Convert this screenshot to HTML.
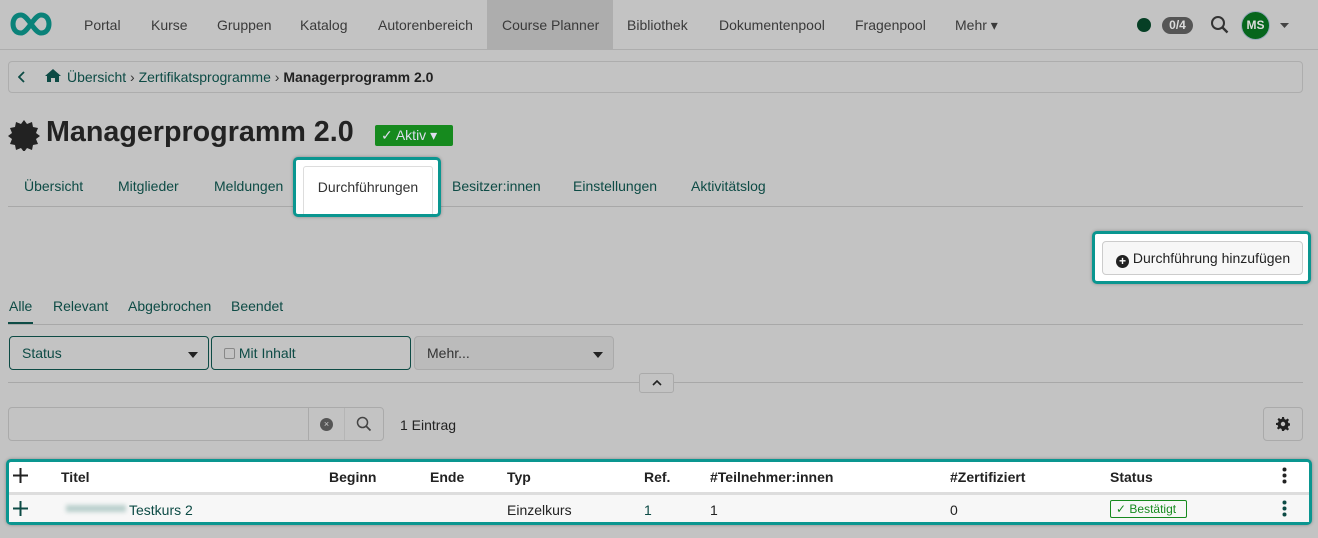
<!DOCTYPE html>
<html><head><meta charset="utf-8">
<style>
*{box-sizing:border-box;margin:0;padding:0}
body{width:1318px;height:538px;background:#c3c3c3;font-family:"Liberation Sans",sans-serif;font-size:14px;color:#333;position:relative;overflow:hidden}
.a{position:absolute;white-space:nowrap}
.nav{left:0;top:0;width:1318px;height:50px;border-bottom:1px solid #adadad}
.nav span{position:absolute;top:17px;color:#3a3a3a}
.g{color:#0d4b45}
.tab{top:178px;color:#0d4b45}
.hl{border:3px solid #0a9690;border-radius:5px;background:#fff;box-shadow:0 0 3px rgba(0,0,0,.3)}
</style></head><body>
<div class="a nav">
<svg style="position:absolute;left:10px;top:11px" width="42" height="26" viewBox="0 0 42 26"><path d="M11 4C5 4 3 9 3 13s2 9 8 9c7 0 13-18 20-18 6 0 8 5 8 9s-2 9-8 9c-7 0-13-18-20-18z" fill="none" stroke="#0a8279" stroke-width="5"/></svg>
<span style="left:84px">Portal</span><span style="left:151px">Kurse</span><span style="left:217px">Gruppen</span><span style="left:300px">Katalog</span><span style="left:378px">Autorenbereich</span>
<div style="position:absolute;left:487px;top:0;width:126px;height:50px;background:#adadad"></div>
<span style="left:502px">Course Planner</span><span style="left:627px">Bibliothek</span><span style="left:719px">Dokumentenpool</span><span style="left:855px">Fragenpool</span><span style="left:955px">Mehr ▾</span>
<div style="position:absolute;left:1137px;top:18px;width:14px;height:14px;border-radius:50%;background:#063f25"></div>
<div style="position:absolute;left:1162px;top:17px;width:31px;height:17px;border-radius:9px;background:#555;color:#ddd;font-size:12px;font-weight:bold;text-align:center;line-height:17px">0/4</div>
<svg style="position:absolute;left:1210px;top:15px" width="20" height="20"><circle cx="8" cy="8" r="6" fill="none" stroke="#333" stroke-width="2"/><path d="M12.5 12.5l5 5" stroke="#333" stroke-width="2.4"/></svg>
<div style="position:absolute;left:1241px;top:11px;width:29px;height:29px;border-radius:50%;background:#06661d;border:1px solid #9ab;color:#ddd;font-size:12px;font-weight:bold;text-align:center;line-height:27px">MS</div>
<svg style="position:absolute;left:1280px;top:23px" width="9" height="5"><path d="M0 0h9L4.5 5z" fill="#444"/></svg>
</div>
<div class="a" style="left:8px;top:61px;width:1295px;height:32px;border:1px solid #adadad;border-radius:4px"></div>
<svg class="a" style="left:18px;top:71px" width="8" height="12"><path d="M6 1L1 6l5 5" fill="none" stroke="#0d4b45" stroke-width="1.8"/></svg>
<svg class="a" style="left:44px;top:68px" width="18" height="15"><path d="M9 1L1 8h2v6h4v-4h4v4h4V8h2z" fill="#0d4b45"/></svg>
<div class="a" style="left:67px;top:69px"><span class="g">Übersicht</span> › <span class="g">Zertifikatsprogramme</span> › <b style="color:#222">Managerprogramm 2.0</b></div>
<svg class="a" style="left:8px;top:119px" width="32" height="32" viewBox="0 0 32 32"><path d="M16 1l3 4 5-2 1 5 5 1-2 5 4 3-4 3 2 5-5 1-1 5-5-2-3 4-3-4-5 2-1-5-5-1 2-5-4-3 4-3-2-5 5-1 1-5 5 2z" fill="#222"/></svg>
<div class="a" style="left:46px;top:116px;font-size:28.7px;font-weight:bold;color:#222">Managerprogramm 2.0</div>
<div class="a" style="left:375px;top:125px;width:78px;height:21px;background:#168a1e;border-radius:2px;color:#dde;font-size:14px;line-height:21px;padding-left:6px">✓ Aktiv ▾</div>
<span class="a tab" style="left:24px">Übersicht</span><span class="a tab" style="left:118px">Mitglieder</span><span class="a tab" style="left:214px">Meldungen</span>
<span class="a tab" style="left:452px">Besitzer:innen</span><span class="a tab" style="left:573px">Einstellungen</span><span class="a tab" style="left:691px">Aktivitätslog</span>
<div class="a" style="left:8px;top:206px;width:1295px;height:1px;background:#a8a8a8"></div>
<div class="a hl" style="left:293px;top:157px;width:148px;height:60px"></div>
<div class="a" style="left:303px;top:166px;width:130px;height:48px;border:1px solid #ddd;border-bottom:none;border-radius:3px 3px 0 0;text-align:center;padding-top:12px;color:#333">Durchführungen</div>
<div class="a hl" style="left:1092px;top:231px;width:219px;height:53px"></div>
<div class="a" style="left:1102px;top:241px;width:201px;height:34px;border:1px solid #ccc;border-radius:4px;background:#f7f7f7;line-height:32px;padding-left:13px;color:#222"><span style="display:inline-block;width:13px;height:13px;border-radius:50%;background:#222;color:#fff;font-size:12px;line-height:13px;text-align:center;font-weight:bold;vertical-align:-2px">+</span> Durchführung hinzufügen</div>
<span class="a g" style="left:9px;top:298px">Alle</span><span class="a g" style="left:53px;top:298px">Relevant</span><span class="a g" style="left:128px;top:298px">Abgebrochen</span><span class="a g" style="left:231px;top:298px">Beendet</span>
<div class="a" style="left:8px;top:322px;width:25px;height:3px;background:#0d4b45"></div>
<div class="a" style="left:8px;top:324px;width:1295px;height:1px;background:#a8a8a8"></div>
<div class="a" style="left:9px;top:336px;width:200px;height:34px;border:1px solid #0d4b45;border-radius:4px;padding:8px 12px"><span class="g">Status</span><svg style="position:absolute;right:10px;top:15px" width="10" height="6"><path d="M0 0h10L5 6z" fill="#222"/></svg></div>
<div class="a" style="left:211px;top:336px;width:200px;height:34px;border:1px solid #0d4b45;border-radius:4px;padding:8px 12px"><span style="display:inline-block;width:11px;height:11px;border:1px solid #888;border-radius:2px;vertical-align:-1px"></span> <span class="g">Mit Inhalt</span></div>
<div class="a" style="left:414px;top:336px;width:200px;height:34px;border:1px solid #aaa;border-radius:4px;padding:8px 12px;background:#bbb">Mehr...<svg style="position:absolute;right:10px;top:15px" width="10" height="6"><path d="M0 0h10L5 6z" fill="#222"/></svg></div>
<div class="a" style="left:8px;top:382px;width:1295px;height:1px;background:#a8a8a8"></div>
<div class="a" style="left:639px;top:373px;width:35px;height:20px;border:1px solid #aaa;border-radius:3px;background:#c3c3c3"><svg style="position:absolute;left:12px;top:6px" width="10" height="6"><path d="M1 5l4-4 4 4" fill="none" stroke="#222" stroke-width="1.6"/></svg></div>
<div class="a" style="left:8px;top:407px;width:376px;height:34px;border:1px solid #aaa;border-radius:4px"></div>
<div class="a" style="left:308px;top:408px;width:1px;height:32px;background:#aaa"></div>
<div class="a" style="left:344px;top:408px;width:1px;height:32px;background:#b5b5b5"></div>
<div class="a" style="left:320px;top:418px;width:13px;height:13px;border-radius:50%;background:#555;color:#ccc;font-size:9px;text-align:center;line-height:13px">×</div>
<svg class="a" style="left:356px;top:416px" width="16" height="16"><circle cx="6.5" cy="6.5" r="5" fill="none" stroke="#444" stroke-width="1.5"/><path d="M10 10l4.5 4.5" stroke="#444" stroke-width="1.7"/></svg>
<span class="a" style="left:400px;top:417px;color:#222">1 Eintrag</span>
<div class="a" style="left:1263px;top:407px;width:40px;height:34px;border:1px solid #aaa;border-radius:4px"></div>
<svg class="a" style="left:1276px;top:417px" width="14" height="14" viewBox="0 0 14 14"><path d="M6 0h2l.4 2 1.5.7 1.7-1.2 1.4 1.4-1.2 1.7.7 1.5 2 .4v2l-2 .4-.7 1.5 1.2 1.7-1.4 1.4-1.7-1.2-1.5.7L8 14H6l-.4-2-1.5-.7-1.7 1.2-1.4-1.4 1.2-1.7L1.5 8 0 8V6l2-.4.7-1.5L1.5 2.4 2.9 1l1.7 1.2L6 1.5z" fill="#222"/><circle cx="7" cy="7" r="2.2" fill="#c3c3c3"/></svg>
<div class="a hl" style="left:6px;top:459px;width:1306px;height:66px"></div>
<div class="a" style="left:9px;top:492px;width:1300px;height:30px;background:#f7f7f7;border-top:3px solid #ddd"></div>
<svg class="a" style="left:13px;top:468px" width="15" height="15"><path d="M7.5 0v15M0 7.5h15" stroke="#222" stroke-width="2"/></svg>
<svg class="a" style="left:13px;top:501px" width="15" height="15"><path d="M7.5 0v15M0 7.5h15" stroke="#0d4b45" stroke-width="2"/></svg>
<div class="a" style="top:469px;left:0;font-weight:bold;color:#222">
<span class="a" style="left:61px">Titel</span><span class="a" style="left:329px">Beginn</span><span class="a" style="left:430px">Ende</span><span class="a" style="left:507px">Typ</span><span class="a" style="left:644px">Ref.</span><span class="a" style="left:710px">#Teilnehmer:innen</span><span class="a" style="left:950px">#Zertifiziert</span><span class="a" style="left:1110px">Status</span></div>
<svg class="a" style="left:1282px;top:467px" width="5" height="17"><circle cx="2.5" cy="2.5" r="2" fill="#222"/><circle cx="2.5" cy="8.5" r="2" fill="#222"/><circle cx="2.5" cy="14.5" r="2" fill="#222"/></svg>
<svg class="a" style="left:1282px;top:500px" width="5" height="17"><circle cx="2.5" cy="2.5" r="2" fill="#0d4b45"/><circle cx="2.5" cy="8.5" r="2" fill="#0d4b45"/><circle cx="2.5" cy="14.5" r="2" fill="#0d4b45"/></svg>
<div class="a" style="left:66px;top:505px;width:60px;height:7px;background:#b9cfcc;filter:blur(2px)"></div>
<span class="a g" style="left:129px;top:502px">Testkurs 2</span>
<span class="a" style="left:507px;top:502px;color:#222">Einzelkurs</span>
<span class="a g" style="left:644px;top:502px">1</span>
<span class="a" style="left:710px;top:502px;color:#222">1</span>
<span class="a" style="left:950px;top:502px;color:#222">0</span>
<div class="a" style="left:1110px;top:500px;width:77px;height:18px;border:1px solid #168a1e;border-radius:2px;color:#168a1e;font-size:12px;line-height:16px;padding-left:5px">✓ Bestätigt</div>
</body></html>
